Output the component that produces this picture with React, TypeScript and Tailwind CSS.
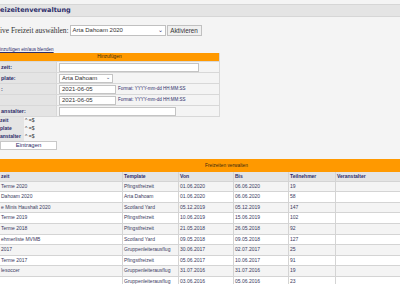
import React from "react";

const rows = [
  ["Terme 2020", "Pfingstfreizeit", "01.06.2020", "06.06.2020", "19"],
  ["Dahoam 2020", "Arta Dahoam", "01.06.2020", "06.06.2020", "58"],
  ["e Minis Haushalt 2020", "Scotland Yard", "05.12.2019", "05.12.2019", "147"],
  ["Terme 2019", "Pfingstfreizeit", "10.06.2019", "15.06.2019", "102"],
  ["Terme 2018", "Pfingstfreizeit", "21.05.2018", "26.05.2018", "92"],
  ["ehmerliste MVMB", "Scotland Yard", "09.05.2018", "09.05.2018", "127"],
  [" 2017", "Gruppenleiterausflug", "30.06.2017", "02.07.2017", "25"],
  ["Terme 2017", "Pfingstfreizeit", "05.06.2017", "10.06.2017", "91"],
  ["lesoccer", "Gruppenleiterausflug", "31.07.2016", "31.07.2016", "19"],
  ["", "Gruppenleiterausflug", "03.06.2016", "05.06.2016", "23"],
];

function Label({ children }: { children: React.ReactNode }) {
  return (
    <div className="flex items-center bg-[#e4e4e4] pl-px text-[5.5px] font-bold text-[#2d2d6a]">
      {children}
    </div>
  );
}

function Field({ w, value }: { w: string; value?: string }) {
  return (
    <div
      className={`${w} flex h-[9px] items-center border border-[#c4c4c4] bg-white px-[2px] text-[6px] text-[#333]`}
    >
      {value}
    </div>
  );
}

export default function App() {
  return (
    <div className="h-[284px] w-[400px] overflow-hidden bg-[#f4f4f4] font-['Liberation_Sans',Arial,sans-serif] text-[#333]">
      <div className="h-[4px]" />
      <div className="flex h-[13px] items-center border-y border-[#d6d6d6] bg-[#e4e4e4] font-['DejaVu_Sans',sans-serif] text-[6.5px] font-bold text-[#2d2d6a]">
        eizeitenverwaltung
      </div>

      <div className="mt-[8px] flex h-[11px] items-center">
        <span className="mr-px shrink-0 whitespace-nowrap font-['Liberation_Serif',serif] text-[7.4px] text-[#333]">
          ive Freizeit auswählen:
        </span>
        <div className="flex h-[11px] w-[96px] items-center justify-between border border-[#c0c0c0] bg-white px-[2px] text-[6px] text-[#333]">
          <span>Arta Dahoam 2020</span>
          <span className="text-[6px] text-[#2d2d6a]">⌄</span>
        </div>
        <div className="ml-px flex h-[11px] w-[35px] items-center justify-center border border-[#c0c0c0] bg-[#f0f0f0] text-[6.3px] text-[#333]">
          Aktivieren
        </div>
      </div>

      <div className="mt-[11px] h-[6px] text-[4.6px] leading-[6px] text-[#2d2d6a] underline">
        inzufügen ein/aus blenden
      </div>

      <div className="w-[220px] border-r border-b border-[#d8d8d8]">
        <div className="flex h-[8px] items-center justify-center bg-[#ff9900] text-[4.8px] text-[#3a2a10]">
          Hinzufügen
        </div>
        <div className="flex flex-col gap-px bg-[#d8d8d8] pt-px">
          <div className="grid h-[10px] grid-cols-[56px_1fr] gap-px">
            <Label>zeit:</Label>
            <div className="flex items-center bg-[#f4f4f4] pl-[2px]">
              <Field w="w-[140px]" />
            </div>
          </div>
          <div className="grid h-[10px] grid-cols-[56px_1fr] gap-px">
            <Label>plate:</Label>
            <div className="flex items-center bg-[#f4f4f4] pl-[2px]">
              <div className="flex h-[9px] w-[54px] items-center justify-between border border-[#c4c4c4] bg-white px-[2px] text-[6px] text-[#333]">
                <span>Arta Dahoam</span>
                <span className="text-[5px] text-[#2d2d6a]">⌄</span>
              </div>
            </div>
          </div>
          {["", ""].map((_, i) => (
            <div key={i} className="grid h-[10px] grid-cols-[56px_1fr] gap-px">
              <Label>{i === 0 ? ":" : ""}</Label>
              <div className="flex items-center gap-[2px] bg-[#f4f4f4] pl-[2px]">
                <Field w="w-[57px]" value="2021-06-05" />
                <span className="whitespace-nowrap text-[4.5px] text-[#2d2d6a]">
                  Format: YYYY-mm-dd HH:MM:SS
                </span>
              </div>
            </div>
          ))}
          <div className="grid h-[10px] grid-cols-[56px_1fr] gap-px">
            <Label>anstalter:</Label>
            <div className="flex items-center bg-[#f4f4f4] pl-[2px]">
              <Field w="w-[117px]" />
            </div>
          </div>
        </div>
      </div>

      <div className="flex flex-col text-[5px]">
        {["zeit", "plate", "anstalter"].map((l) => (
          <div key={l} className="flex h-[8px] items-center">
            <span className="w-[24px] bg-[#e4e4e4] font-bold text-[#2d2d6a]">{l}</span>
            <span className="ml-px text-[#333]">^ =$</span>
          </div>
        ))}
      </div>
      <div className="flex h-[9px] w-[57px] items-center justify-center border border-[#c8c8c8] bg-white text-[6px] text-[#2d2d6a]">
        Eintragen
      </div>

      <div className="mt-[9px] flex h-[13px] items-center bg-[#ff9900] pl-[205px] text-[4.8px] text-[#3a2a10]">
        Freizeiten verwalten
      </div>
      <div className="grid grid-cols-[122px_55px_54px_54px_46px_1fr] gap-px bg-[#d4d4d4] text-[5px]">
        {["zeit", "Template", "Von", "Bis", "Teilnehmer", "Veranstalter"].map((h) => (
          <div key={h} className="flex h-[8.6px] items-center bg-[#e4e4e4] pl-px font-bold text-[#2d2d6a]">
            {h}
          </div>
        ))}
        {rows.map((r, i) =>
          [...r, ""].map((c, j) => (
            <div
              key={`${i}-${j}`}
              className={`flex h-[9.6px] items-center whitespace-nowrap pl-px text-[#3a3a60] ${
                i % 2 === 0 ? "bg-[#f4f4f4]" : "bg-white"
              }`}
            >
              {c}
            </div>
          ))
        )}
      </div>
    </div>
  );
}
